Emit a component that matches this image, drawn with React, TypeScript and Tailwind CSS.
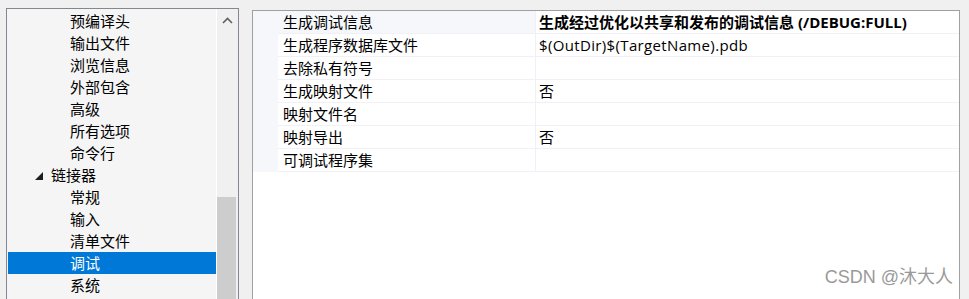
import React from 'react';

const treeItems = [
  { label: '预编译头', level: 2 },
  { label: '输出文件', level: 2 },
  { label: '浏览信息', level: 2 },
  { label: '外部包含', level: 2 },
  { label: '高级', level: 2 },
  { label: '所有选项', level: 2 },
  { label: '命令行', level: 2 },
  { label: '链接器', level: 1 },
  { label: '常规', level: 2 },
  { label: '输入', level: 2 },
  { label: '清单文件', level: 2 },
  { label: '调试', level: 2, selected: true },
  { label: '系统', level: 2 },
];

const props = [
  { name: '生成调试信息', value: '生成经过优化以共享和发布的调试信息 (/DEBUG:FULL)', bold: true, active: true },
  { name: '生成程序数据库文件', value: '$(OutDir)$(TargetName).pdb' },
  { name: '去除私有符号', value: '' },
  { name: '生成映射文件', value: '否' },
  { name: '映射文件名', value: '' },
  { name: '映射导出', value: '否' },
  { name: '可调试程序集', value: '' },
];

const font = { fontFamily: '"Open Sans", "Noto Sans CJK SC", sans-serif' };

export default function App() {
  return (
    <div className="relative w-[969px] h-[299px] overflow-hidden bg-[#f0f0f0] text-[15px] text-black" style={font}>
      <div className="flex items-start">
        {/* tree */}
        <div className="ml-[6px] mt-[8px] w-[233px] h-[320px] flex border border-[#828790] bg-[#f5f5f5]">
          <div className="w-[209px] pl-px pt-px">
            {treeItems.map((it) => (
              <div
                key={it.label}
                className={`h-[22px] flex items-center leading-[22px] ${it.selected ? 'bg-[#0078d7] text-white' : ''} ${it.level === 1 ? 'pl-[27px]' : 'pl-[62px]'}`}
              >
                {it.level === 1 && (
                  <svg width="8" height="8" viewBox="0 0 8 8" className="mr-[8px] mt-[2px]">
                    <polygon points="0,8 8,8 8,0" fill="#1e1e1e" />
                  </svg>
                )}
                {it.label}
              </div>
            ))}
          </div>
          <div className="w-[22px] border-l border-white bg-[#f0f0f0] flex flex-col">
            <div className="h-[188px] flex justify-center pt-[8px]">
              <svg width="11" height="7" viewBox="0 0 11 7">
                <path d="M1 6 L5.5 1.5 L10 6" fill="none" stroke="#606060" strokeWidth="1.6" />
              </svg>
            </div>
            <div className="w-[19px] flex-1 bg-[#cdcdcd]" />
          </div>
        </div>

        {/* property grid */}
        <div className="ml-[13px] mt-[10px] w-[708px] h-[320px] border border-[#a0a0a0] bg-white">
          <div className="flex">
            <div className="w-[25px] h-[161px] bg-[#f5f7fa]" />
            <div className="flex-1">
              {props.map((p) => (
                <div key={p.name} className="h-[23px] flex border-b border-[#f0f0f6]">
                  <div className={`w-[258px] pl-[5px] leading-[22px] border-r border-[#f0f0f6] ${p.active ? 'bg-[#f5f7fa]' : ''}`}>
                    {p.name}
                  </div>
                  <div className={`flex-1 pl-[3px] leading-[22px] ${p.bold ? 'font-bold' : 'tracking-[0.35px]'}`}>{p.value}</div>
                </div>
              ))}
            </div>
          </div>
        </div>
      </div>

      <div
        className="absolute right-[16px] top-[266px] text-[18px] leading-[22px] text-[#9a9a9a]"
        style={{ fontFamily: '"Liberation Sans", "Noto Sans CJK SC", sans-serif' }}
      >
        CSDN @沐大人
      </div>
    </div>
  );
}
